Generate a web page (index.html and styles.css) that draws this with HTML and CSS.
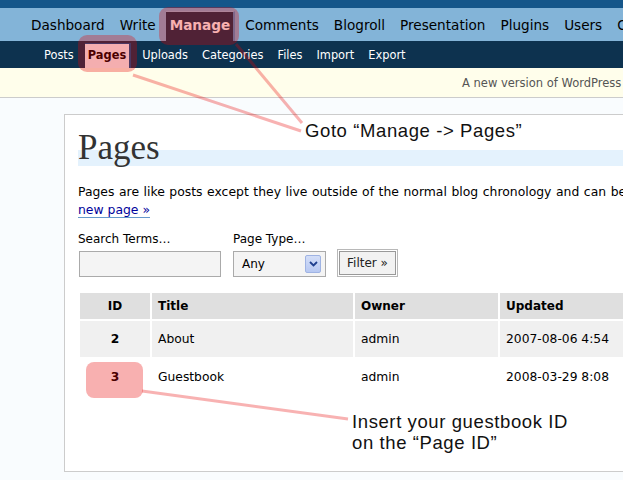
FILE: index.html
```html
<!DOCTYPE html>
<html>
<head>
<meta charset="utf-8">
<title>Pages</title>
<link rel="stylesheet" href="styles.css">
</head>
<body>
<div class="page">
  <div class="wphead"></div>
  <ul class="adminmenu">
    <li><a href="#">Dashboard</a></li>
    <li><a href="#">Write</a></li>
    <li><a href="#" class="current">Manage</a></li>
    <li><a href="#">Comments</a></li>
    <li><a href="#">Blogroll</a></li>
    <li><a href="#">Presentation</a></li>
    <li><a href="#">Plugins</a></li>
    <li><a href="#">Users</a></li>
    <li><a href="#">Options</a></li>
  </ul>
  <ul class="submenu">
    <li><a href="#">Posts</a></li>
    <li><a href="#" class="current">Pages</a></li>
    <li><a href="#">Uploads</a></li>
    <li><a href="#">Categories</a></li>
    <li><a href="#">Files</a></li>
    <li><a href="#">Import</a></li>
    <li><a href="#">Export</a></li>
  </ul>
  <div class="update-nag">A new version of WordPress is available! Please update now.</div>
  <div class="wrap">
    <h2>Pages</h2>
    <p class="intro">Pages are like posts except they live outside of the normal blog chronology and can be used to hold static content. You can create a<br><a href="#">new page »</a></p>
    <form class="filters">
      <div class="field">
        <label>Search Terms…</label>
        <input type="text" class="search">
      </div>
      <div class="field field-type">
        <label>Page Type…</label>
        <div class="select"><span>Any</span><span class="arrow"><svg width="9" height="6" viewBox="0 0 9 6"><path d="M1 1 L4.5 4.5 L8 1" fill="none" stroke="#1f3f8f" stroke-width="1.8"/></svg></span></div>
      </div>
      <button type="button" class="button">Filter »</button>
    </form>
    <table class="widefat">
      <colgroup><col class="c-id"><col class="c-title"><col class="c-owner"><col class="c-upd"></colgroup>
      <thead>
        <tr><th class="id">ID</th><th>Title</th><th>Owner</th><th>Updated</th></tr>
      </thead>
      <tbody>
        <tr class="alt"><th class="id">2</th><td>About</td><td>admin</td><td>2007-08-06 4:54</td></tr>
        <tr><th class="id mark">3</th><td>Guestbook</td><td>admin</td><td>2008-03-29 8:08</td></tr>
      </tbody>
    </table>
  </div>
  <svg class="arrows" width="623" height="480" viewBox="0 0 623 480">
    <line x1="236" y1="44" x2="302" y2="123" />
    <line x1="133" y1="75" x2="301" y2="131" />
    <line x1="142" y1="391" x2="348" y2="419" />
  </svg>
  <div class="note note-goto">Goto “Manage -&gt; Pages”</div>
  <div class="note note-insert">Insert your guestbook ID<br>on the “Page ID”</div>
</div>
</body>
</html>
```
FILE: styles.css
```css
html, body {
  margin: 0;
  padding: 0;
  overflow: hidden;
}
body {
  background: #f9fcfe;
  font-family: "DejaVu Sans", Verdana, sans-serif;
  font-size: 12px;
  color: #000;
  width: 623px;
  height: 480px;
}
.page {
  position: relative;
  width: 1100px;
  height: 480px;
}
.wphead {
  height: 8px;
  background: #14568a;
}
.adminmenu {
  list-style: none;
  margin: 0;
  padding: 3px 0 0 26px;
  height: 30px;
  background: #83b4d8;
  display: flex;
  gap: 5px;
}
.adminmenu a {
  position: relative;
  display: block;
  box-sizing: border-box;
  height: 30px;
  line-height: 28px;
  padding: 0 5px;
  font-size: 13.6px;
  color: #000;
  text-decoration: none;
}
.adminmenu a.current {
  background: #0d324f;
  color: #fff;
  font-weight: bold;
  border-top: 1px solid #96c0de;
  border-right: 2px solid #4f96c8;
  line-height: 27px;
  padding: 0 3px 0 4px;
}
.adminmenu a.current::after {
  content: "";
  position: absolute;
  left: -7px;
  right: -6px;
  top: -5px;
  bottom: -4px;
  border-radius: 9px;
  background: rgba(231, 0, 0, 0.31);
}
.submenu {
  list-style: none;
  margin: 0;
  padding: 2px 0 0 41px;
  height: 25px;
  background: #0d324f;
  display: flex;
  gap: 8px;
}
.submenu a {
  position: relative;
  display: block;
  box-sizing: border-box;
  height: 25px;
  line-height: 25px;
  padding: 0 3px;
  font-size: 11.4px;
  color: #fff;
  text-decoration: none;
}
.submenu a.current {
  background: #f9fcfe;
  color: #000;
  font-weight: bold;
  border-top: 1px solid #045290;
  border-right: 2px solid #045290;
  line-height: 23px;
}
.submenu a.current::after {
  content: "";
  position: absolute;
  left: -7px;
  right: -8px;
  top: -9px;
  bottom: -4px;
  border-radius: 9px;
  background: rgba(231, 0, 0, 0.31);
}
.update-nag {
  height: 29px;
  line-height: 31px;
  border-bottom: 1px solid #ccc;
  background: #fffeeb;
  color: #555;
  font-size: 11.5px;
  padding-left: 462px;
  white-space: nowrap;
}
.wrap {
  box-sizing: border-box;
  margin: 16px 0 0 64px;
  width: 1000px;
  height: 358px;
  border: 1px solid #ccc;
  background: #fff;
  padding: 0 13px;
}
.wrap h2 {
  margin: 13px 0 0;
  font: normal 35px/40px "Liberation Serif", Georgia, serif;
  color: #333;
  background: linear-gradient(to bottom, transparent 22px, #e4f2fd 22px, #e4f2fd 38px, transparent 38px);
}
.intro {
  margin: 15px 0 0;
  line-height: 18px;
  font-size: 12.4px;
  word-spacing: 0.6px;
  white-space: nowrap;
}
.intro a {
  color: #00019b;
  text-decoration: none;
  border-bottom: 1px solid #69c;
  word-spacing: 0;
}
.filters {
  display: flex;
  align-items: flex-end;
  margin-top: 12px;
}
.field label {
  display: block;
  line-height: 16px;
  margin-bottom: 4px;
}
.search {
  display: block;
  box-sizing: border-box;
  width: 142px;
  height: 26px;
  margin: 0 0 0 1px;
  border: 1px solid #aaa;
  background: #f4f4f4;
}
.field-type {
  margin-left: 12px;
}
.select {
  box-sizing: border-box;
  width: 93px;
  height: 26px;
  border: 1px solid #aaa;
  background: #f4f4f4;
  display: flex;
  align-items: center;
  justify-content: space-between;
  padding: 0 4px 0 8px;
}
.select .arrow {
  box-sizing: border-box;
  width: 16px;
  height: 18px;
  background: linear-gradient(#d3def8, #b7c8f2);
  border: 1px solid #9fb3e3;
  border-radius: 2px;
  display: flex;
  align-items: center;
  justify-content: center;
}
.button {
  box-sizing: border-box;
  margin-left: 11px;
  width: 61px;
  height: 28px;
  padding: 0;
  font-family: "DejaVu Sans", Verdana, sans-serif;
  font-size: 12px;
  color: #222;
  background: #f2f2f2;
  border: 1px solid #b8b8b8;
  box-shadow: inset 0 0 0 1px #fff, inset 0 0 0 2px #999;
}
.widefat {
  margin-top: 14px;
  border-spacing: 2px;
  table-layout: fixed;
  width: 624px;
}
.c-id { width: 70px; }
.c-title { width: 201px; }
.c-owner { width: 143px; }
.c-upd { width: 200px; }
.widefat th, .widefat td {
  padding: 0 6px;
  font-size: 12.3px;
  text-align: left;
  white-space: nowrap;
}
.widefat thead th {
  height: 26px;
  background: #dfdfdf;
  font-weight: bold;
  font-size: 12px;
}
.widefat tbody th, .widefat tbody td {
  height: 36px;
}
.widefat .id {
  text-align: center;
  font-weight: bold;
}
.widefat tr.alt th, .widefat tr.alt td {
  background: #f0f0f0;
}
.widefat .mark {
  position: relative;
}
.widefat .mark::after {
  content: "";
  position: absolute;
  left: 6px;
  right: 7px;
  top: 3px;
  bottom: -3px;
  border-radius: 8px;
  background: rgba(231, 0, 0, 0.31);
}
.arrows {
  position: absolute;
  left: 0;
  top: 0;
  pointer-events: none;
}
.arrows line {
  stroke: rgba(231, 0, 0, 0.3);
  stroke-width: 3;
}
.note {
  position: absolute;
  font: 18.5px/21px "Liberation Sans", Arial, sans-serif;
  letter-spacing: 0.6px;
  color: #111;
  white-space: nowrap;
}
.note-goto {
  left: 305px;
  top: 120px;
}
.note-insert {
  left: 352px;
  top: 411px;
}
```
